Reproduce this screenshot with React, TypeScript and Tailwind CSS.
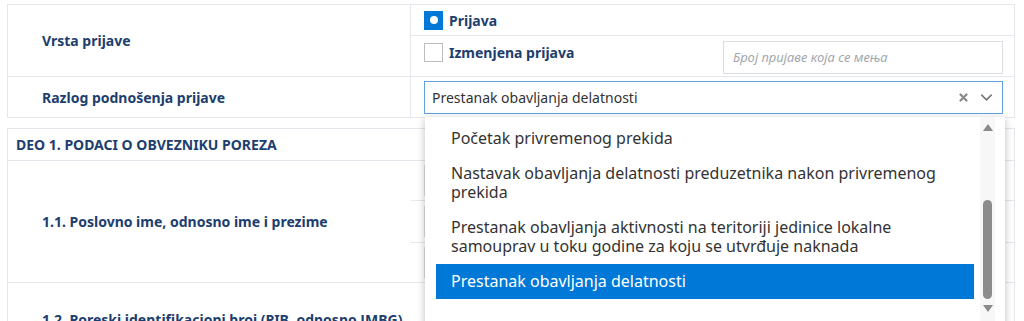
import { ChevronDown } from "lucide-react";

const labelFont = { fontFamily: '"Noto Sans", "Open Sans", sans-serif' };

const options = [
  "Početak privremenog prekida",
  "Nastavak obavljanja delatnosti preduzetnika nakon privremenog prekida",
  "Prestanak obavljanja aktivnosti na teritoriji jedinice lokalne samouprav u toku godine za koju se utvrđuje naknada",
  "Prestanak obavljanja delatnosti",
];

function Dropdown() {
  return (
    <div className="absolute left-[425px] top-[117px] w-[580px] h-[220px] bg-white shadow-[0_2px_8px_rgba(0,0,0,0.25)] flex">
      {/* lista opcija */}
      <div className="flex-1 pt-[4px] pl-[11px] pr-[6px]">
        {options.map((o, i) => (
          <div
            key={o}
            className={`px-[15px] py-[8px] text-[16px] leading-[19px] ${
              i === 3 ? "bg-[#0078d7] text-white" : "text-[#333]"
            }`}
          >
            {o}
          </div>
        ))}
      </div>
      {/* scrollbar */}
      <div className="w-[15px] mr-[10px] bg-[#f7f7f7] flex flex-col items-center pt-[7px]">
        <div className="w-0 h-0 border-l-[5px] border-r-[5px] border-b-[7px] border-l-transparent border-r-transparent border-b-[#8a8a8a]" />
        <div className="mt-[69px] w-[9px] h-[99px] rounded-full bg-[#8c8c8c]" />
        <div className="mt-[6px] w-0 h-0 border-l-[5px] border-r-[5px] border-t-[7px] border-l-transparent border-r-transparent border-t-[#8a8a8a]" />
      </div>
    </div>
  );
}

export default function App() {
  return (
    <div className="relative w-full h-[321px] overflow-hidden bg-white pt-[4px] pl-[7px] pr-[9px]" style={labelFont}>
      {/* zaglavlje prijave */}
      <div className="border border-[#e4e7eb] grid grid-cols-[403px_1fr]">
        <div className="flex items-center pl-[34px] border-r border-[#e4e7eb] h-[71px] text-[14px] font-bold text-[#1d3e6e]">
          Vrsta prijave
        </div>
        <div className="flex flex-col">
          <div className="h-[31px] border-b border-[#e4e7eb] flex items-center pl-[13px] gap-[6px]">
            <span className="w-[19px] h-[19px] bg-[#0078d7] flex items-center justify-center">
              <span className="w-[8px] h-[8px] rounded-full bg-white" />
            </span>
            <span className="text-[14px] font-bold text-[#1d3e6e]">Prijava</span>
          </div>
          <div className="h-[40px] flex items-start pl-[13px] pt-[6px] gap-[6px]">
            <span className="w-[19px] h-[19px] border border-[#bdbdbd] bg-white mt-[1px]" />
            <span className="text-[14px] font-bold text-[#1d3e6e]">Izmenjena prijava</span>
            <div className="ml-auto mr-[11px] -mt-[1px] w-[280px] h-[33px] border border-[#dadde1] flex items-center pl-[9px] text-[13px] italic text-[#a3a8ae]">
              Број пријаве која се мења
            </div>
          </div>
        </div>
        <div className="flex items-center pl-[34px] border-r border-t border-[#e4e7eb] h-[41px] text-[14px] font-bold text-[#1d3e6e]">
          Razlog podnošenja prijave
        </div>
        <div className="border-t border-[#e4e7eb] h-[41px] pl-[13px] pr-[11px] flex items-center">
          <div className="w-full h-[33px] border border-[#5fa3e0] flex items-center pl-[7px] pr-[6px] text-[14px] text-[#333]">
            <span>Prestanak obavljanja delatnosti</span>
            <svg width="9" height="9" viewBox="0 0 9 9" className="ml-auto mr-[9px]">
              <path d="M1.5 1.5 L7.5 7.5 M7.5 1.5 L1.5 7.5" stroke="#888" strokeWidth="2.2" strokeLinecap="round" />
            </svg>
            <ChevronDown size={19} strokeWidth={2} className="text-[#777]" />
          </div>
        </div>
      </div>

      {/* DEO 1 */}
      <div className="mt-[10px] border border-[#e4e7eb]">
        <div className="h-[32px] flex items-center pl-[8px] border-b border-[#e4e7eb] text-[14px] font-bold text-[#1d3e6e]">
          DEO 1. PODACI O OBVEZNIKU POREZA
        </div>
        <div className="grid grid-cols-[403px_1fr] border-b border-[#e4e7eb]">
          <div className="h-[121px] flex items-center pl-[34px] text-[14px] font-bold text-[#1d3e6e]">
            1.1. Poslovno ime, odnosno ime i prezime
          </div>
          <div className="flex flex-col">
            <div className="h-[40px] border-b border-[#e4e7eb] pl-[13px] pr-[13px] flex items-center">
              <div className="w-full h-[31px] border border-[#dadde1]" />
            </div>
            <div className="h-[42px] border-b border-[#e4e7eb] pl-[13px] pr-[13px] flex items-center">
              <div className="w-full h-[31px] border border-[#dadde1]" />
            </div>
            <div className="flex-1 pl-[13px] pr-[13px] flex items-center">
              <div className="w-full h-[31px] border border-[#dadde1]" />
            </div>
          </div>
        </div>
        <div className="grid grid-cols-[403px_1fr]">
          <div className="h-[80px] pt-[26px] pl-[34px] text-[14px] font-bold text-[#1d3e6e]">
            1.2. Poreski identifikacioni broj (PIB, odnosno JMBG)
          </div>
          <div />
        </div>
      </div>

      <Dropdown />
    </div>
  );
}
